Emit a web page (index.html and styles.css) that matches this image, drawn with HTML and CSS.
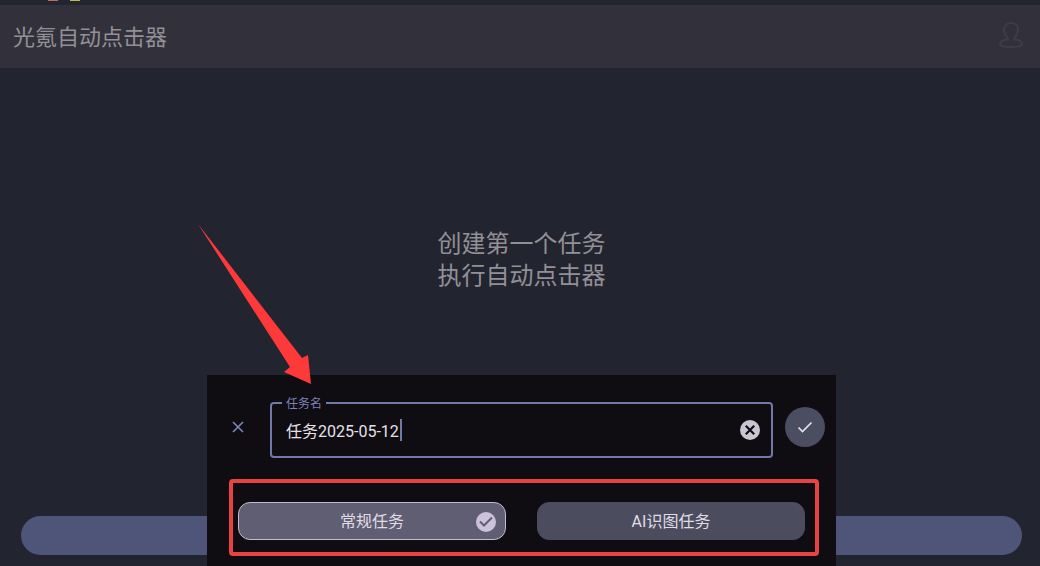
FILE: index.html
```html
<!DOCTYPE html>
<html lang="zh-CN">
<head>
    <meta charset="UTF-8">
    <meta name="viewport" content="width=device-width, initial-scale=1.0">
    <title>光氪自动点击器</title>
    <link rel="stylesheet" href="styles.css">
</head>
<body>
    <div class="status-bar">
        <span class="status-dot orange"></span>
        <span class="status-dot yellow"></span>
    </div>

    <header class="app-bar">
        <h1>光氪自动点击器</h1>
        <a href="#" class="user-link" aria-label="用户">
            <svg width="26" height="28" viewBox="0 0 26 28" fill="none" stroke="currentColor" stroke-width="2">
                <path d="M10 18.5C10 16.5 6 14 6 8.5C6 4.500 9 2 13 2S20 4.500 20 8.500C20 14 16 16.500 16 18.500C20 18.500 24 20 24 22.500C24 25.500 20 26 13 26S2 25.500 2 22.500C2 20 6 18.500 10 18.500Z"/>
            </svg>
        </a>
    </header>

    <main class="empty">
        <p>创建第一个任务<br>执行自动点击器</p>
    </main>

    <footer class="bottom">
        <button class="create-btn" type="button" aria-label="创建任务"></button>
    </footer>

    <form class="dialog">
        <div class="name-row">
            <button class="close-btn" type="button" aria-label="关闭">
                <svg width="12" height="12" viewBox="0 0 12 12" stroke="currentColor" stroke-width="1.6">
                    <path d="M1 1L11 11M11 1L1 11"/>
                </svg>
            </button>
            <div class="field">
                <label for="task-name">任务名</label>
                <input id="task-name" type="text" value="任务2025-05-12">
                <span class="caret"></span>
                <button class="clear-btn" type="button" aria-label="清除">
                    <svg width="20" height="20" viewBox="0 0 20 20">
                        <circle cx="10" cy="10" r="10" fill="#cac5d0"/>
                        <path d="M5.800 5.800L14.200 14.200M14.200 5.800L5.800 14.200" stroke="#0f0d13" stroke-width="2.200"/>
                    </svg>
                </button>
            </div>
            <button class="ok-btn" type="submit" aria-label="确定">
                <svg width="16" height="12" viewBox="0 0 16 12" fill="none" stroke="currentColor" stroke-width="1.700">
                    <path d="M1.500 6.500L5.500 10.500L14.500 1.500"/>
                </svg>
            </button>
        </div>

        <div class="types">
            <button class="type-btn selected" type="button" aria-pressed="true">常规任务
                <svg class="type-check" width="20" height="20" viewBox="0 0 20 20" fill="none">
                    <circle cx="10" cy="10" r="10" fill="#ccc2dc"/>
                    <path d="M4 9.500L8 13.500L16 5.500" stroke="#5f5e72" stroke-width="2"/>
                </svg>
            </button>
            <button class="type-btn" type="button" aria-pressed="false">AI识图任务</button>
        </div>
    </form>

    <svg class="arrow" width="116" height="162" viewBox="0 0 116 162">
        <path d="M1 0L105 134L111 131L114 160L87 148L93 143Z" fill="#fd3a39"/>
    </svg>
</body>
</html>
```
FILE: styles.css
```css
* {
    box-sizing: border-box;
}

body {
    margin: 0;
    min-height: 100vh;
    display: flex;
    flex-direction: column;
    position: relative;
    background-color: #22242f;
    color: #929096;
    font-family: Roboto, "Noto Sans CJK SC", sans-serif;
}

button {
    padding: 0;
    border: none;
    background: none;
    font-family: inherit;
    cursor: pointer;
}

svg {
    display: block;
}

.status-bar {
    display: flex;
    gap: 12px;
    height: 5px;
    padding-left: 48px;
}

.status-dot {
    width: 10px;
    height: 1px;
}

.orange {
    background-color: #c0694f;
}

.yellow {
    background-color: #c4b94f;
}

.app-bar {
    display: flex;
    align-items: center;
    justify-content: space-between;
    height: 63px;
    padding: 0 16px 3px 13px;
    background-color: #31303b;
}

.app-bar h1 {
    margin: 0;
    font-size: 22px;
    font-weight: 400;
}

.user-link {
    color: #3d3c48;
}

.empty {
    flex: 1;
    display: flex;
    align-items: center;
    justify-content: center;
    padding: 0 0 64px 3px;
}

.empty p {
    margin: 0;
    font-size: 24px;
    line-height: 32px;
}

.bottom {
    padding: 0 18px 11px 21px;
}

.create-btn {
    display: block;
    width: 100%;
    height: 39px;
    border-radius: 20px;
    background-color: #4e5578;
}

/* bottom dialog */
.dialog {
    position: absolute;
    left: 207px;
    right: 204px;
    bottom: 0;
    padding: 27px 0 10px;
    background-color: #0f0c12;
}

.name-row {
    display: flex;
    gap: 12px;
    padding: 0 11px;
}

.close-btn,
.ok-btn {
    display: flex;
    align-items: center;
    justify-content: center;
    width: 40px;
    height: 40px;
    margin-top: 5px;
    border-radius: 50%;
    color: #7f86b5;
}

.ok-btn {
    background-color: #4b4d60;
    color: #e6e1e9;
}

.field {
    position: relative;
    flex: 1;
    display: flex;
    align-items: center;
    height: 56px;
    padding: 0 11px 1px 14px;
    border: 2px solid #6f7aa8;
    border-radius: 4px;
}

.field label {
    position: absolute;
    left: 10px;
    top: -8px;
    padding: 0 4px;
    background-color: #0f0c12;
    color: #7c82b4;
    font-size: 12px;
    line-height: 16px;
}

.field input {
    flex: 1;
    min-width: 0;
    padding: 0;
    border: none;
    outline: none;
    background: none;
    color: #e6e1e9;
    font-family: inherit;
    font-size: 16px;
}

.caret {
    position: absolute;
    left: 128px;
    top: 15px;
    width: 2px;
    height: 22px;
    background-color: #6f7aa8;
}

.types {
    display: grid;
    grid-template-columns: 1fr 1fr;
    gap: 31px;
    margin: 21px 17px 0 22px;
    padding: 19px 10px 12px 5px;
    border: 4px solid #e94242;
    border-radius: 4px;
}

.type-btn {
    position: relative;
    height: 38px;
    padding-bottom: 2px;
    border: 1px solid #4b4c5c;
    border-radius: 12px;
    background-color: #4b4d5f;
    color: #e0dce6;
    font-size: 16px;
}

.type-btn.selected {
    border-color: #c2bccd;
    background-color: #5f5e72;
}

.type-check {
    position: absolute;
    right: 9px;
    top: 9px;
}

.arrow {
    position: absolute;
    left: 197px;
    top: 224px;
    pointer-events: none;
}
```
